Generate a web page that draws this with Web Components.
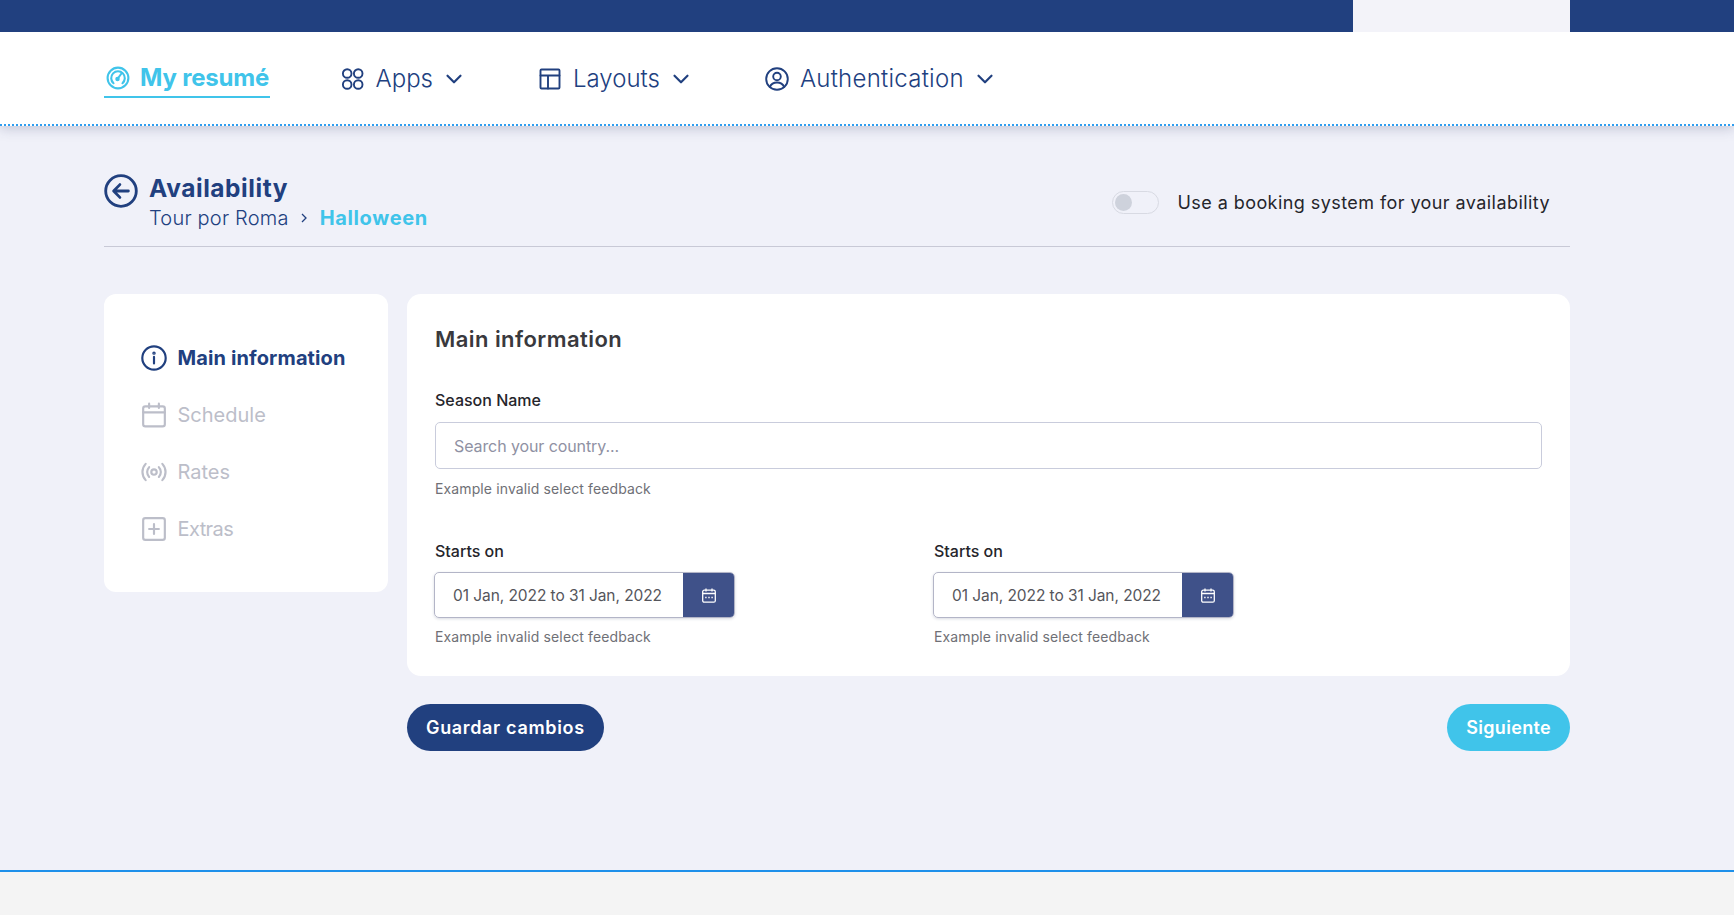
<!DOCTYPE html>
<html lang="en">
<head>
<meta charset="utf-8">
<title>Availability</title>
<style>
  html, body { margin: 0; height: 100%; }
  body {
    display: flex;
    flex-direction: column;
    height: 915px;
    overflow: hidden;
    background: #f0f1f9;
    font-family: Inter, "Noto Sans", sans-serif;
    color: #21407f;
  }
  page-body { flex: 1; }
</style>
</head>
<body>
<app-topbar></app-topbar>
<app-nav>
  <nav-item active label="My resumé" icon="gauge" style="letter-spacing:-.2px"></nav-item>
  <nav-item label="Apps" icon="apps" caret></nav-item>
  <nav-item label="Layouts" icon="layout" caret></nav-item>
  <nav-item label="Authentication" icon="user" caret style="letter-spacing:.26px"></nav-item>
</app-nav>
<page-body>
  <page-header title="Availability" parent="Tour por Roma" current="Halloween">
    <booking-toggle>Use a booking system for your availability</booking-toggle>
  </page-header>
  <side-menu slot="side">
    <side-item active icon="info" style="letter-spacing:.12px">Main information</side-item>
    <side-item icon="calendar">Schedule</side-item>
    <side-item icon="broadcast">Rates</side-item>
    <side-item icon="plus" style="letter-spacing:-.6px">Extras</side-item>
  </side-menu>
  <form-card slot="main" heading="Main information">
    <form-field label="Season Name" hint="Example invalid select feedback">
      <text-box placeholder="Search your country..."></text-box>
    </form-field>
    <form-field compact label="Starts on" hint="Example invalid select feedback" slot="dates">
      <date-range value="01 Jan, 2022 to 31 Jan, 2022"></date-range>
    </form-field>
    <form-field compact label="Starts on" hint="Example invalid select feedback" slot="dates">
      <date-range value="01 Jan, 2022 to 31 Jan, 2022"></date-range>
    </form-field>
  </form-card>
  <pill-button slot="save" tone="navy" style="letter-spacing:.66px">Guardar cambios</pill-button>
  <pill-button slot="next" tone="sky" style="letter-spacing:.33px">Siguiente</pill-button>
</page-body>
<app-footer></app-footer>

<script>
const ICONS = {
  gauge: '<circle cx="12" cy="12" r="10.400"/><path d="M7.500 17.200a6.800 6.800 0 1 1 9 0"/><circle cx="11.500" cy="13" r="1.200" fill="currentColor"/><path d="M11.800 12.500l4-5.500"/>',
  apps: '<circle cx="7.200" cy="6.500" r="4.300"/><circle cx="18.200" cy="6.500" r="4.300"/><circle cx="7.200" cy="17.500" r="4.300"/><circle cx="18.200" cy="17.500" r="4.300"/>',
  layout: '<rect x="3.500" y="2.500" width="19" height="19" rx="1"/><path d="M3.500 8.500h19M11 8.500v13"/>',
  user: '<circle cx="13" cy="12" r="10.800"/><circle cx="13" cy="9.500" r="3.800"/><path d="M5.800 20c1.400-3.200 4-4.500 7.200-4.500s5.800 1.300 7.200 4.500"/>',
  back: '<circle cx="12" cy="12" r="10.800"/><path d="M17.200 12H7M11.200 7.500L6.800 12l4.400 4.500"/>',
  info: '<circle cx="12" cy="12" r="10.800"/><path d="M12 11v6"/><circle cx="12" cy="7.500" r=".6"/>',
  calendar: '<rect x="2" y="4" width="20" height="18.500" rx="2"/><path d="M2 9.500h20M7.500 1.500v4M16.500 1.500v4"/>',
  broadcast: '<circle cx="12" cy="12" r="2.500"/><path d="M7.500 7.500a6.500 6.500 0 0 0 0 9M16.500 7.500a6.500 6.500 0 0 1 0 9M4.300 4.500a11 11 0 0 0 0 15M19.700 4.500a11 11 0 0 1 0 15"/>',
  plus: '<rect x="2" y="2" width="20" height="20" rx="2"/><path d="M12 7.500v9M7.500 12h9"/>',
  chevron: '<path d="M6 9l6 6 6-6"/>'
}

/**
 * Returns the markup of a stroked icon.
 *
 * @param {string} name The key in ICONS.
 * @param {number} size The size in pixels.
 * @param {number} stroke The stroke width in viewBox units.
 * @returns {string} The svg markup.
 */
function icon (name, size, stroke) {
  return `<svg width="${size}" height="${size}" viewBox="0 0 24 24" fill="none" stroke="currentColor" stroke-width="${stroke}" stroke-linecap="round" stroke-linejoin="round" aria-hidden="true">${ICONS[name]}</svg>`
}

customElements.define('app-topbar',
  class extends HTMLElement {
    constructor () {
      super()
      this.attachShadow({ mode: 'open' }).innerHTML = `
        <style>
          :host { display: flex; justify-content: flex-end; height: 32px; padding-right: 164px; background: #21407f; position: relative; z-index: 2; }
          div { width: 217px; background: #f3f3f9; }
        </style>
        <div></div>`
    }
  })

customElements.define('app-nav',
  class extends HTMLElement {
    constructor () {
      super()
      this.attachShadow({ mode: 'open' }).innerHTML = `
        <style>
          :host {
            display: flex;
            align-items: center;
            gap: 69.500px;
            height: 91px;
            padding: 1px 0 0 104px;
            background: #fff;
            border-bottom: 2px dotted #2e9df0;
            box-shadow: 0 2px 12px rgba(60, 70, 110, .28);
            position: relative;
            z-index: 1;
          }
        </style>
        <slot></slot>`
    }
  })

customElements.define('nav-item',
  class extends HTMLElement {
    constructor () {
      super()
      const active = this.hasAttribute('active')
      const caret = this.hasAttribute('caret') ? `<span class="caret">${icon('chevron', 26, 2)}</span>` : ''
      this.attachShadow({ mode: 'open' }).innerHTML = `
        <style>
          :host { display: flex; align-items: center; gap: 12px; height: 38px; font-size: 24px; font-weight: 350; color: #21407f; }
          :host([active]) { height: 36px; padding: 0 1px 0 2px; gap: 10px; font-weight: 700; color: #40c4ea; border-bottom: 2px solid #40c4ea; }
          .caret { display: flex; margin-left: -3.500px; }
          svg { display: block; overflow: visible; }
        </style>
        ${icon(this.getAttribute('icon'), 24, active ? 2.1 : 1.9)}<span>${this.getAttribute('label')}</span>${caret}`
    }
  })

customElements.define('page-body',
  class extends HTMLElement {
    constructor () {
      super()
      this.attachShadow({ mode: 'open' }).innerHTML = `
        <style>
          :host { display: block; padding: 47px 164px 0 104px; }
          .grid { display: grid; grid-template-columns: 284px 1163px; column-gap: 19px; margin-top: 47px; align-items: start; }
          .actions { display: flex; justify-content: space-between; grid-column: 2; margin-top: 28px; }
        </style>
        <slot></slot>
        <div class="grid">
          <slot name="side"></slot>
          <slot name="main"></slot>
          <div class="actions"><slot name="save"></slot><slot name="next"></slot></div>
        </div>`
    }
  })

customElements.define('page-header',
  class extends HTMLElement {
    constructor () {
      super()
      this.attachShadow({ mode: 'open' }).innerHTML = `
        <style>
          :host { display: flex; justify-content: space-between; align-items: flex-start; height: 73px; border-bottom: 1.500px solid #c8c9d6; }
          .left { display: flex; gap: 11px; align-items: flex-start; }
          .back { display: flex; margin-top: 1px; }
          h1 { margin: 0; font-size: 24.500px; letter-spacing: .55px; line-height: 30px; font-weight: 700; }
          .crumbs { display: flex; align-items: center; font-size: 20px; font-weight: 350; line-height: 30px; letter-spacing: .2px; }
          .sep { margin: 0 10.500px; display: flex; }
          b { font-weight: 700; letter-spacing: .65px; color: #40c4ea; }
          slot { display: block; margin-top: 18px; }
        </style>
        <div class="left">
          <span class="back">${icon('back', 34, 2)}</span>
          <div>
            <h1>${this.getAttribute('title')}</h1>
            <div class="crumbs"><span>${this.getAttribute('parent')}</span><span class="sep"><svg width="10" height="12" viewBox="0 0 10 12" fill="none" stroke="currentColor" stroke-width="1.300"><path d="M3 2l4 4-4 4"/></svg></span><b>${this.getAttribute('current')}</b></div>
          </div>
        </div>
        <slot></slot>`
    }
  })

customElements.define('booking-toggle',
  class extends HTMLElement {
    constructor () {
      super()
      this.attachShadow({ mode: 'open' }).innerHTML = `
        <style>
          :host { display: flex; align-items: center; gap: 19px; padding-right: 20px; font-size: 18px; letter-spacing: .43px; color: #25252b; }
          .track { box-sizing: border-box; width: 47px; height: 23px; border: 1.500px solid #d8dae3; border-radius: 12px; padding: 2px; }
          .knob { width: 17px; height: 17px; border-radius: 50%; background: #ced2dc; }
        </style>
        <div class="track"><div class="knob"></div></div><span><slot></slot></span>`
    }
  })

customElements.define('side-menu',
  class extends HTMLElement {
    constructor () {
      super()
      this.attachShadow({ mode: 'open' }).innerHTML = `
        <style>
          :host { display: flex; flex-direction: column; gap: 31px; box-sizing: border-box; height: 298px; padding: 51px 0 0 36.500px; background: #fff; border-radius: 12px; }
        </style>
        <slot></slot>`
    }
  })

customElements.define('side-item',
  class extends HTMLElement {
    constructor () {
      super()
      this.attachShadow({ mode: 'open' }).innerHTML = `
        <style>
          :host { display: flex; align-items: center; gap: 11px; height: 26px; font-size: 20px; color: #bcbec9; }
          :host([active]) { font-weight: 700; color: #21407f; }
          svg { display: block; }
        </style>
        ${icon(this.getAttribute('icon'), 26, 2)}<span><slot></slot></span>`
    }
  })

customElements.define('form-card',
  class extends HTMLElement {
    constructor () {
      super()
      this.attachShadow({ mode: 'open' }).innerHTML = `
        <style>
          :host { display: block; box-sizing: border-box; height: 382px; padding: 30px 28px 0; background: #fff; border-radius: 14px; }
          h2 { margin: 0 0 34px; font-size: 22px; letter-spacing: .44px; line-height: 30px; font-weight: 600; color: #39393d; }
          .dates { display: grid; grid-template-columns: 301px 301px; column-gap: 198px; margin-top: 39px; }
        </style>
        <h2>${this.getAttribute('heading')}</h2>
        <slot></slot>
        <div class="dates"><slot name="dates"></slot></div>`
    }
  })

customElements.define('form-field',
  class extends HTMLElement {
    constructor () {
      super()
      this.attachShadow({ mode: 'open' }).innerHTML = `
        <style>
          :host { display: block; }
          label { display: block; font-size: 16px; line-height: 24px; font-weight: 500; color: #25252b; margin-bottom: 10px; }
          small { display: block; margin-top: 9px; font-size: 14px; letter-spacing: .12px; line-height: 22px; color: #6f7076; }
          :host([compact]) label { margin-bottom: 9px; }
          :host([compact]) small { margin-top: 8px; }
        </style>
        <label>${this.getAttribute('label')}</label>
        <slot></slot>
        <small>${this.getAttribute('hint')}</small>`
    }
  })

customElements.define('text-box',
  class extends HTMLElement {
    constructor () {
      super()
      this.attachShadow({ mode: 'open' }).innerHTML = `
        <style>
          :host { display: flex; align-items: center; box-sizing: border-box; width: 1107px; height: 47px; padding-left: 18px; border: 1.500px solid #c9ccdc; border-radius: 5px; font-size: 16px; letter-spacing: -.1px; color: #8f91a3; }
        </style>
        <span>${this.getAttribute('placeholder')}</span>`
    }
  })

customElements.define('date-range',
  class extends HTMLElement {
    constructor () {
      super()
      this.attachShadow({ mode: 'open' }).innerHTML = `
        <style>
          :host { display: flex; box-sizing: border-box; width: 301px; height: 46px; margin-left: -1px; border: 1.500px solid #b3b5c7; border-radius: 5px; font-size: 15.500px; letter-spacing: -.07px; color: #55555b; overflow: hidden; box-shadow: 0 1px 3px rgba(40, 50, 90, .18); }
          .value { flex: 1; display: flex; align-items: center; padding-left: 18px; }
          .btn { width: 51px; display: flex; align-items: center; justify-content: center; background: #3f5189; color: #fff; }
        </style>
        <div class="value">${this.getAttribute('value')}</div>
        <div class="btn">
          <svg width="14" height="15" viewBox="0 0 14 15" fill="none" stroke="currentColor" stroke-width="1.300" aria-hidden="true"><rect x=".7" y="2.200" width="12.600" height="12" rx="1.500"/><path d="M.7 5.500h12.600M4 .5v3M10 .5v3"/><path d="M3.200 9.500h1.400M6.300 9.500h1.400M9.400 9.500h1.400" stroke-width="1.500"/></svg>
        </div>`
    }
  })

customElements.define('pill-button',
  class extends HTMLElement {
    constructor () {
      super()
      this.attachShadow({ mode: 'open' }).innerHTML = `
        <style>
          :host { display: inline-flex; align-items: center; height: 47px; padding: 0 19px; border-radius: 24px; font-size: 18px; font-weight: 600; color: #fff; background: #21407f; }
          :host([tone="sky"]) { background: #40c4ea; }
        </style>
        <slot></slot>`
    }
  })

customElements.define('app-footer',
  class extends HTMLElement {
    constructor () {
      super()
      this.attachShadow({ mode: 'open' }).innerHTML = `
        <style>
          :host { display: block; height: 43px; background: #f4f4f4; border-top: 2px solid #1e90ea; }
        </style>`
    }
  })
</script>
</body>
</html>
